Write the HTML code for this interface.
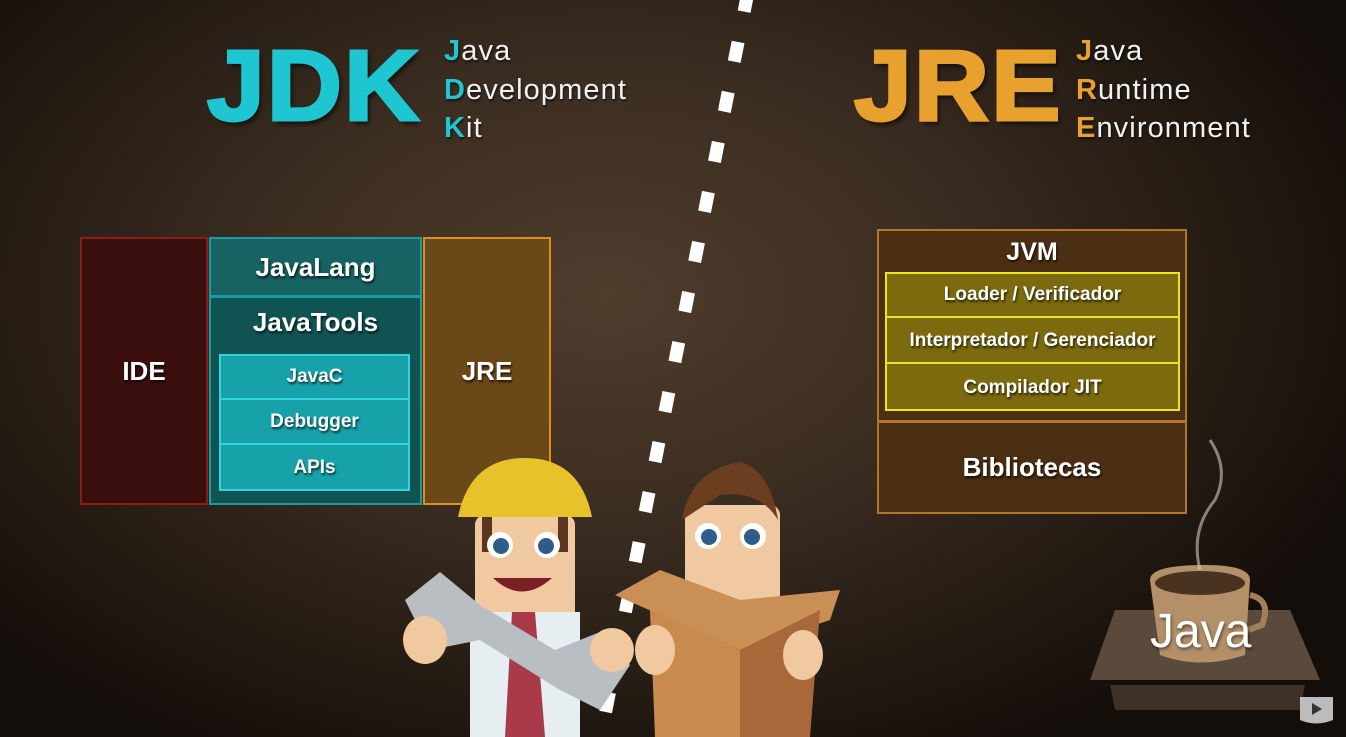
<!DOCTYPE html>
<html><head><meta charset="utf-8"><style>
*{margin:0;padding:0;box-sizing:border-box}
body{width:1346px;height:737px;overflow:hidden;position:relative;font-family:"Liberation Sans",sans-serif;
background:radial-gradient(ellipse 60% 70% at 45% 40%,#4f3d2d 0%,#3a2c20 45%,#1f1710 85%,#140e0a 100%);}
.a{position:absolute}
.big{font-weight:bold;font-size:100px;letter-spacing:2px;transform-origin:left top;transform:scaleX(1.04);line-height:1;text-shadow:3px 4px 4px rgba(0,0,0,.6);-webkit-text-stroke:3px currentColor}
.sub{color:#f2f2f2;font-size:29px;letter-spacing:1.1px;line-height:38.5px;text-shadow:1px 2px 2px rgba(0,0,0,.6)}
.t{color:#fff;font-weight:bold;text-align:center;text-shadow:1px 2px 2px rgba(0,0,0,.7);display:flex;align-items:center;justify-content:center}
</style></head><body>
<div class="a big" style="left:207px;top:36px;color:#1ec6d2">JDK</div>
<div class="a sub" style="left:444px;top:32px"><b style="color:#1ec6d2">J</b>ava<br><b style="color:#1ec6d2">D</b>evelopment<br><b style="color:#1ec6d2">K</b>it</div>
<div class="a big" style="left:854px;top:36px;color:#e8a02e">JRE</div>
<div class="a sub" style="left:1076px;top:32px"><b style="color:#e8a02e">J</b>ava<br><b style="color:#e8a02e">R</b>untime<br><b style="color:#e8a02e">E</b>nvironment</div>

<svg class="a" style="left:0;top:0" width="1346" height="737"><line x1="748" y1="-8" x2="604" y2="720" stroke="#fff" stroke-width="13" stroke-dasharray="20 31"/></svg>

<div class="a t" style="left:80px;top:237px;width:128px;height:268px;background:#3a0f0e;border:2px solid #8e1c1a;font-size:26px">IDE</div>
<div class="a" style="left:209px;top:237px;width:213px;height:268px;background:#0f5353;border:2px solid #1a9b9e"></div>
<div class="a t" style="left:211px;top:239px;width:209px;height:59px;background:#176262;border-bottom:3px solid #1a9b9e;font-size:26px">JavaLang</div>
<div class="a t" style="left:211px;top:302px;width:209px;height:40px;font-size:26px">JavaTools</div>
<div class="a" style="left:219px;top:354px;width:191px;height:137px;background:#17a2aa;border:2px solid #34d4dc"></div>
<div class="a t" style="left:221px;top:356px;width:187px;height:44px;border-bottom:2px solid #34d4dc;font-size:19px">JavaC</div>
<div class="a t" style="left:221px;top:401px;width:187px;height:44px;border-bottom:2px solid #34d4dc;font-size:19px">Debugger</div>
<div class="a t" style="left:221px;top:446px;width:187px;height:43px;font-size:19px">APIs</div>
<div class="a t" style="left:423px;top:237px;width:128px;height:268px;background:#6a4818;border:2px solid #d98f22;font-size:26px">JRE</div>

<div class="a" style="left:877px;top:229px;width:310px;height:193px;background:#4b2f12;border:2px solid #b4742a"></div>
<div class="a t" style="left:877px;top:234px;width:310px;height:36px;font-size:25px">JVM</div>
<div class="a" style="left:885px;top:272px;width:295px;height:139px;background:#7b6a0e;border:2px solid #ece41c"></div>
<div class="a t" style="left:887px;top:274px;width:291px;height:44px;border-bottom:2px solid #ece41c;font-size:19px">Loader / Verificador</div>
<div class="a t" style="left:887px;top:320px;width:291px;height:44px;border-bottom:2px solid #ece41c;font-size:19px">Interpretador / Gerenciador</div>
<div class="a t" style="left:887px;top:366px;width:291px;height:43px;font-size:19px">Compilador JIT</div>
<div class="a t" style="left:877px;top:421px;width:310px;height:93px;background:#4b2f12;border:2px solid #b4742a;font-size:26px">Bibliotecas</div>

<svg class="a" style="left:0;top:0" width="1346" height="737">
<rect x="475" y="515" width="100" height="110" rx="10" fill="#f1c9a0"/>
<rect x="482" y="512" width="10" height="40" fill="#5a3520"/><rect x="558" y="512" width="10" height="40" fill="#5a3520"/>
<path d="M458 517 Q470 458 525 458 Q580 458 592 517 Z" fill="#e8c22a"/>
<circle cx="500" cy="545" r="13" fill="#fff"/><circle cx="547" cy="545" r="13" fill="#fff"/>
<circle cx="501" cy="546" r="8" fill="#2f5d8a"/><circle cx="546" cy="546" r="8" fill="#2f5d8a"/>
<path d="M493 578 Q522 605 552 578 Z" fill="#7a1f24"/>
<rect x="470" y="612" width="110" height="125" fill="#e6eef2"/>
<path d="M512 612 L535 612 L545 737 L505 737 Z" fill="#a83a4a"/>
<path d="M405 600 L440 572 L480 605 L555 650 L600 632 L630 665 L600 710 L560 690 L480 640 L430 650 Z" fill="#b9bec3"/>
<ellipse cx="425" cy="640" rx="22" ry="24" fill="#f1c9a0"/><ellipse cx="612" cy="650" rx="22" ry="22" fill="#f1c9a0"/>
<rect x="685" y="505" width="95" height="100" rx="10" fill="#f1c9a0"/>
<path d="M682 520 Q690 470 740 462 Q770 470 778 520 Q760 490 720 495 Z" fill="#6b3e20"/>
<circle cx="708" cy="536" r="13" fill="#fff"/><circle cx="753" cy="536" r="13" fill="#fff"/>
<circle cx="709" cy="537" r="8" fill="#2f5d8a"/><circle cx="752" cy="537" r="8" fill="#2f5d8a"/>
<path d="M615 595 L660 570 L740 600 L840 590 L830 620 L740 650 Z" fill="#c98f55"/>
<path d="M650 610 L740 650 L740 737 L655 737 Z" fill="#c88a4e"/>
<path d="M740 650 L820 610 L810 737 L740 737 Z" fill="#a8683a"/>
<ellipse cx="655" cy="650" rx="20" ry="25" fill="#f1c9a0"/><ellipse cx="803" cy="655" rx="20" ry="25" fill="#f1c9a0"/>
<path d="M1115 610 L1290 610 L1320 680 L1090 680 Z" fill="#5a4a3c"/>
<path d="M1110 685 L1305 685 L1300 710 L1115 710 Z" fill="#3d3128"/>
<path d="M1150 580 Q1150 565 1205 565 Q1250 565 1250 580 L1245 655 Q1200 670 1160 655 Z" fill="#b39068"/>
<ellipse cx="1200" cy="583" rx="45" ry="12" fill="#4a3220"/>
<path d="M1250 595 Q1272 600 1262 625 L1248 630" stroke="#a08058" stroke-width="6" fill="none"/>
<path d="M1200 570 Q1190 530 1215 500 Q1230 470 1210 440" stroke="#ccc" stroke-width="3" fill="none" opacity=".6"/>
<path d="M1316 697 L1333 697 L1333 720 Q1316 727 1300 720 L1300 697 Z" fill="#cfcfcf" opacity=".9"/>
<path d="M1312 703 L1322 709 L1312 715 Z" fill="#333"/>
</svg>
<div class="a" style="left:1150px;top:604px;color:#fff;font-size:48px;text-shadow:1px 2px 3px rgba(0,0,0,.5)">Java</div>
</body></html>
